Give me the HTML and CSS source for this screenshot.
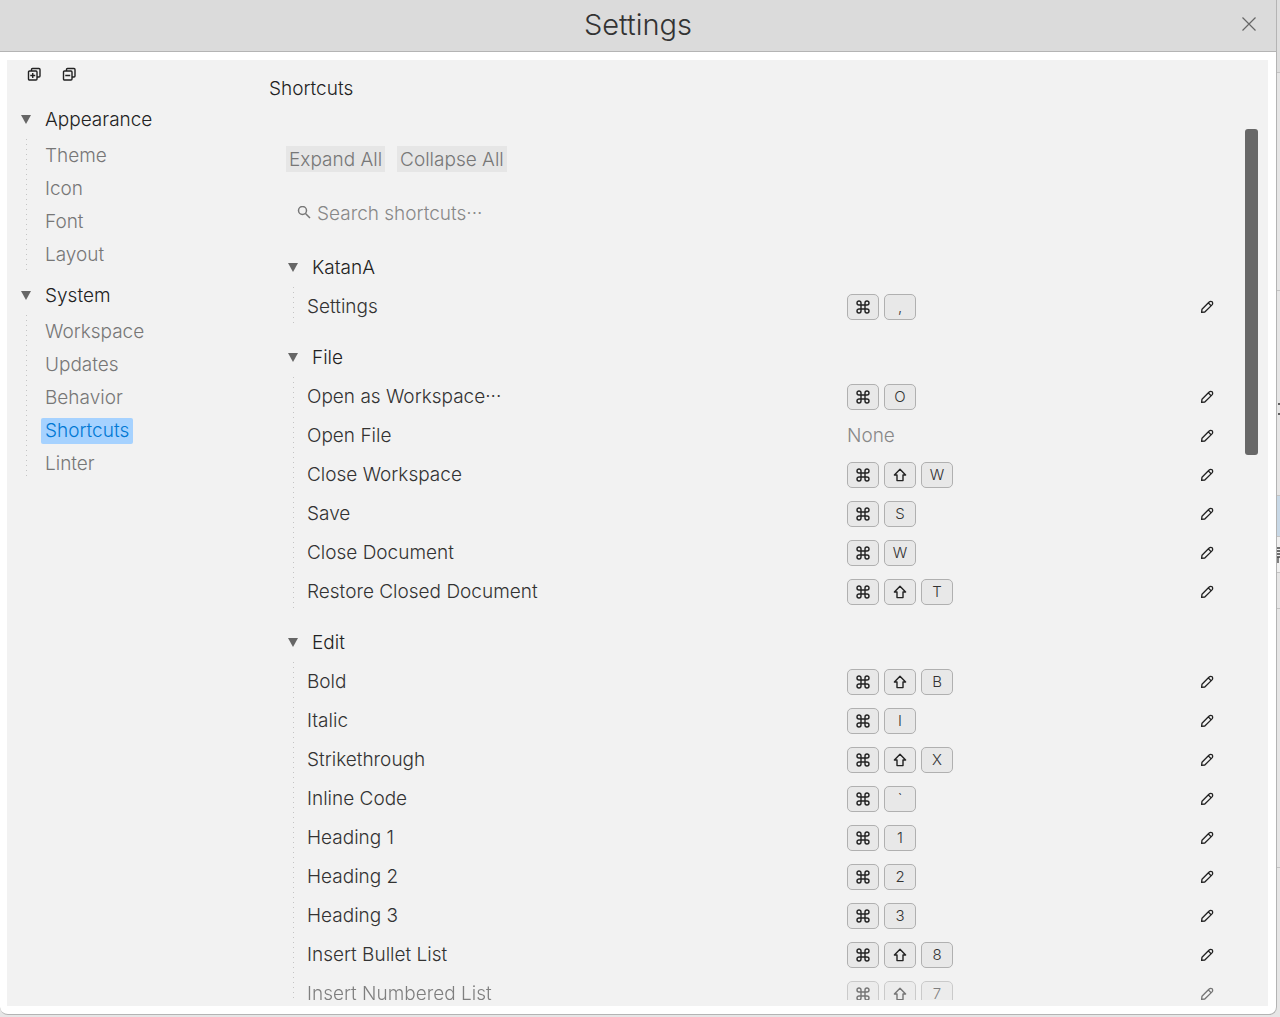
FILE: index.html
```html
<!DOCTYPE html>
<html lang="en">
<head>
    <meta charset="UTF-8">
    <meta name="viewport" content="width=device-width, initial-scale=1.0">
    <title>Settings</title>
    <link rel="stylesheet" href="styles.css">
</head>
<body>

<!-- Icons -->
<svg class="sprite" aria-hidden="true">
    <symbol id="cmd" viewBox="0 0 14 14">
        <path d="M5 5V3a2 2 0 1 0-2 2h8a2 2 0 1 0-2-2v8a2 2 0 1 0 2-2H3a2 2 0 1 0 2 2z" fill="none" stroke="currentColor" stroke-width="1.4"/>
    </symbol>
    <symbol id="shift" viewBox="0 0 14 14">
        <path d="M7 1.2L1.4 7H4V12.6H10V7H12.6Z" fill="none" stroke="currentColor" stroke-width="1.4" stroke-linejoin="round"/>
    </symbol>
    <symbol id="pencil" viewBox="0 0 14 14">
        <path d="M1.6 12.4L2 9.2L8.9 2.2Q10.500 .7 12.200 1.8Q13.300 3.500 11.800 5.100L4.800 12ZM8.300 2.900L11.100 5.700" fill="none" stroke="currentColor" stroke-width="1.3" stroke-linejoin="round"/>
    </symbol>
    <symbol id="arrow" viewBox="0 0 10 9">
        <path d="M0 0H10L5 9Z" fill="currentColor"/>
    </symbol>
</svg>

<div class="window">
    <header class="titlebar">
        <h1>Settings</h1>
        <button class="close" aria-label="Close">
            <svg width="14" height="14" viewBox="0 0 14 14"><path d="M.5.5l13 13M13.5.5l-13 13" stroke="currentColor" stroke-width="1.2"/></svg>
        </button>
    </header>

    <div class="panel">
        <nav class="sidebar">
            <div class="tools">
                <button aria-label="Expand all sections">
                    <svg width="14" height="14" viewBox="0 0 14 14" fill="none" stroke="currentColor" stroke-width="1.4"><rect x="1.5" y="4" width="8.500" height="9" rx="1"/><path d="M4.500 4V2.500Q4.500 1.500 5.500 1.500H12Q13 1.500 13 2.500V9Q13 10 12 10H10M5.750 6v5M3.250 8.500h5"/></svg>
                </button>
                <button aria-label="Collapse all sections">
                    <svg width="14" height="14" viewBox="0 0 14 14" fill="none" stroke="currentColor" stroke-width="1.4"><rect x="1.5" y="4" width="8.500" height="9" rx="1"/><path d="M4.500 4V2.500Q4.500 1.500 5.500 1.500H12Q13 1.500 13 2.500V9Q13 10 12 10H10M3.250 8.500h5"/></svg>
                </button>
            </div>

            <section class="group">
                <button class="group-title"><svg class="arrow"><use href="#arrow"/></svg>Appearance</button>
                <ul class="links">
                    <li><a href="#theme">Theme</a></li>
                    <li><a href="#icon">Icon</a></li>
                    <li><a href="#font">Font</a></li>
                    <li><a href="#layout">Layout</a></li>
                </ul>
            </section>

            <section class="group">
                <button class="group-title"><svg class="arrow"><use href="#arrow"/></svg>System</button>
                <ul class="links">
                    <li><a href="#workspace">Workspace</a></li>
                    <li><a href="#updates">Updates</a></li>
                    <li><a href="#behavior">Behavior</a></li>
                    <li><a href="#shortcuts" class="active">Shortcuts</a></li>
                    <li><a href="#linter">Linter</a></li>
                </ul>
            </section>
        </nav>

        <main class="content">
            <h2>Shortcuts</h2>

            <div class="scroll-area">
                <div class="shortcuts">
                    <div class="actions">
                        <button>Expand All</button>
                        <button>Collapse All</button>
                    </div>

                    <label class="search">
                        <svg width="14" height="14" viewBox="0 0 14 14" fill="none" stroke="currentColor" stroke-width="1.5"><circle cx="5.500" cy="4.500" r="4"/><path d="M8.500 7.500L13 12"/></svg>
                        <input type="text" placeholder="Search shortcuts···" aria-label="Search shortcuts">
                    </label>

                    <!-- KatanA -->
                    <section class="category">
                        <button class="group-title"><svg class="arrow"><use href="#arrow"/></svg>KatanA</button>
                        <ul class="rows">
                            <li><span>Settings</span><div class="keys"><kbd><svg><use href="#cmd"/></svg></kbd><kbd>,</kbd></div><button class="edit" aria-label="Edit"><svg><use href="#pencil"/></svg></button></li>
                        </ul>
                    </section>

                    <!-- File -->
                    <section class="category">
                        <button class="group-title"><svg class="arrow"><use href="#arrow"/></svg>File</button>
                        <ul class="rows">
                            <li><span>Open as Workspace···</span><div class="keys"><kbd><svg><use href="#cmd"/></svg></kbd><kbd>O</kbd></div><button class="edit" aria-label="Edit"><svg><use href="#pencil"/></svg></button></li>
                            <li><span>Open File</span><div class="keys none">None</div><button class="edit" aria-label="Edit"><svg><use href="#pencil"/></svg></button></li>
                            <li><span>Close Workspace</span><div class="keys"><kbd><svg><use href="#cmd"/></svg></kbd><kbd><svg><use href="#shift"/></svg></kbd><kbd>W</kbd></div><button class="edit" aria-label="Edit"><svg><use href="#pencil"/></svg></button></li>
                            <li><span>Save</span><div class="keys"><kbd><svg><use href="#cmd"/></svg></kbd><kbd>S</kbd></div><button class="edit" aria-label="Edit"><svg><use href="#pencil"/></svg></button></li>
                            <li><span>Close Document</span><div class="keys"><kbd><svg><use href="#cmd"/></svg></kbd><kbd>W</kbd></div><button class="edit" aria-label="Edit"><svg><use href="#pencil"/></svg></button></li>
                            <li><span>Restore Closed Document</span><div class="keys"><kbd><svg><use href="#cmd"/></svg></kbd><kbd><svg><use href="#shift"/></svg></kbd><kbd>T</kbd></div><button class="edit" aria-label="Edit"><svg><use href="#pencil"/></svg></button></li>
                        </ul>
                    </section>

                    <!-- Edit -->
                    <section class="category">
                        <button class="group-title"><svg class="arrow"><use href="#arrow"/></svg>Edit</button>
                        <ul class="rows">
                            <li><span>Bold</span><div class="keys"><kbd><svg><use href="#cmd"/></svg></kbd><kbd><svg><use href="#shift"/></svg></kbd><kbd>B</kbd></div><button class="edit" aria-label="Edit"><svg><use href="#pencil"/></svg></button></li>
                            <li><span>Italic</span><div class="keys"><kbd><svg><use href="#cmd"/></svg></kbd><kbd>I</kbd></div><button class="edit" aria-label="Edit"><svg><use href="#pencil"/></svg></button></li>
                            <li><span>Strikethrough</span><div class="keys"><kbd><svg><use href="#cmd"/></svg></kbd><kbd><svg><use href="#shift"/></svg></kbd><kbd>X</kbd></div><button class="edit" aria-label="Edit"><svg><use href="#pencil"/></svg></button></li>
                            <li><span>Inline Code</span><div class="keys"><kbd><svg><use href="#cmd"/></svg></kbd><kbd>`</kbd></div><button class="edit" aria-label="Edit"><svg><use href="#pencil"/></svg></button></li>
                            <li><span>Heading 1</span><div class="keys"><kbd><svg><use href="#cmd"/></svg></kbd><kbd>1</kbd></div><button class="edit" aria-label="Edit"><svg><use href="#pencil"/></svg></button></li>
                            <li><span>Heading 2</span><div class="keys"><kbd><svg><use href="#cmd"/></svg></kbd><kbd>2</kbd></div><button class="edit" aria-label="Edit"><svg><use href="#pencil"/></svg></button></li>
                            <li><span>Heading 3</span><div class="keys"><kbd><svg><use href="#cmd"/></svg></kbd><kbd>3</kbd></div><button class="edit" aria-label="Edit"><svg><use href="#pencil"/></svg></button></li>
                            <li><span>Insert Bullet List</span><div class="keys"><kbd><svg><use href="#cmd"/></svg></kbd><kbd><svg><use href="#shift"/></svg></kbd><kbd>8</kbd></div><button class="edit" aria-label="Edit"><svg><use href="#pencil"/></svg></button></li>
                            <li class="faded"><span>Insert Numbered List</span><div class="keys"><kbd><svg><use href="#cmd"/></svg></kbd><kbd><svg><use href="#shift"/></svg></kbd><kbd>7</kbd></div><button class="edit" aria-label="Edit"><svg><use href="#pencil"/></svg></button></li>
                        </ul>
                    </section>
                </div>
                <div class="scrollbar"><div class="thumb"></div></div>
            </div>
        </main>
    </div>
</div>

<!-- Edge of the window behind -->
<div class="backdrop" aria-hidden="true">
    <div class="strip-top"></div>
    <div class="strip-upper"></div>
    <div class="strip-list"><svg width="3" height="12" viewBox="0 0 3 12"><path d="M1 1H3M1 11H3" stroke="#333" stroke-width="1.500"/></svg></div>
    <div class="strip-selected"></div>
    <div class="strip-text"><svg width="3" height="16" viewBox="0 0 3 16"><path d="M0 1H3M0 4H3M0 7H3M0 10H3M1 10V16" stroke="#444" stroke-width="1.300"/></svg></div>
    <div class="strip-lower"></div>
    <div class="strip-rest"></div>
</div>

</body>
</html>
```
FILE: styles.css
```css
* {
    box-sizing: border-box;
}
body {
    margin: 0;
    height: 100vh;
    display: flex;
    overflow: hidden;
    background: #e6e6e6;
    color: #333;
    font-family: Inter, "Noto Sans CJK JP", sans-serif;
    font-size: 19px;
    font-weight: 300;
}
button, input {
    font: inherit;
    color: inherit;
    border: none;
    background: none;
    padding: 0;
}
button {
    cursor: pointer;
}
h1, h2, ul {
    margin: 0;
    padding: 0;
    font-weight: 300;
    list-style: none;
}
.sprite {
    display: none;
}
.window {
    flex: 1;
    min-width: 0;
    display: flex;
    flex-direction: column;
    margin-bottom: 2px;
    background: #fff;
    border: 1px solid #b4b4b4;
    border-width: 0 1px 1px 0;
    border-radius: 0 0 8px 8px;
}

/* Title bar */
.titlebar {
    display: grid;
    grid-template-columns: 1fr auto 1fr;
    align-items: center;
    height: 52px;
    padding-right: 20px;
    background: #dbdbdb;
    border-bottom: 1px solid #b4b4b4;
}
.titlebar h1 {
    grid-column: 2;
    padding: 0 0 2px 20px;
    font-size: 29px;
    line-height: 40px;
}
.close {
    justify-self: end;
    height: 20px;
    padding: 0 0 4px;
    color: #666;
}
.close svg {
    display: block;
    margin-top: 1px;
}

.panel {
    flex: 1;
    min-height: 0;
    display: flex;
    margin: 8px 8px 8px 7px;
    background: #f2f2f2;
}

/* Sidebar */
.sidebar {
    width: 262px;
    padding-left: 14px;
}
.tools {
    display: flex;
    gap: 21px;
    height: 39px;
    padding: 7px 6px;
    color: #222;
}
.tools button {
    height: 14px;
}
.tools svg {
    display: block;
}
.group {
    margin-bottom: 4px;
}
.group-title {
    display: flex;
    align-items: center;
    gap: 14px;
    height: 40px;
    color: #222;
}
.arrow {
    width: 10px;
    height: 9px;
    color: #666;
}
.links, .rows {
    background: repeating-linear-gradient(#c4c4c4 0 1px, transparent 1px 5px) left top / 1px 100% no-repeat;
}
.links {
    margin-left: 5px;
    padding-left: 15px;
}
.links li {
    display: flex;
    align-items: center;
    height: 33px;
}
.links a {
    padding: 0 4px;
    line-height: 26px;
    border-radius: 2px;
    color: #777;
    text-decoration: none;
}
.links a.active {
    background: #a6d2ff;
    color: #0078d4;
}

/* Shortcuts page */
.content {
    flex: 1;
    min-width: 0;
    display: flex;
    flex-direction: column;
    padding-bottom: 6px;
}
.content h2 {
    padding: 12px 0 23px;
    font-size: 19px;
    line-height: 34px;
    color: #222;
}
.scroll-area {
    flex: 1;
    min-height: 0;
    display: flex;
    padding-right: 10px;
}
.shortcuts {
    flex: 1;
    min-width: 0;
    overflow: hidden;
    padding: 17px 31px 0 17px;
}
.actions {
    display: flex;
    gap: 12px;
}
.actions button {
    padding: 1px 3px 0;
    line-height: 25px;
    background: #e6e6e6;
    color: #777;
}
.search {
    display: flex;
    align-items: center;
    gap: 6px;
    margin: 26px 0 19px;
    padding-left: 11px;
    color: #777;
}
.search input {
    flex: 1;
    height: 30px;
    outline: none;
}
.search input::placeholder {
    color: #888;
    opacity: 1;
}
.category {
    margin-bottom: 11px;
    padding-left: 2px;
}
.rows {
    margin-left: 5px;
    padding-left: 14px;
}
.rows li {
    display: grid;
    grid-template-columns: minmax(0, 540px) 1fr auto;
    align-items: center;
    height: 39px;
}
.rows li.faded {
    opacity: 0.6;
}
.keys {
    display: flex;
    gap: 5px;
}
.none {
    color: #888;
}
kbd {
    display: flex;
    align-items: center;
    justify-content: center;
    width: 32px;
    height: 26px;
    border: 1px solid #b0b0b0;
    border-radius: 5px;
    background: #e8e8e8;
    font-family: inherit;
    font-size: 15px;
}
kbd svg, .edit svg {
    display: block;
    width: 14px;
    height: 14px;
    color: #222;
}
.scrollbar {
    width: 13px;
}
.thumb {
    height: 326px;
    border-radius: 3px;
    background: #686868;
}

/* Window behind */
.backdrop {
    width: 3px;
    overflow: hidden;
    display: flex;
    flex-direction: column;
}
.backdrop div {
    flex: none;
    border-bottom: 1px solid #c4c4c4;
}
.backdrop svg {
    display: block;
}
.strip-top {
    height: 73px;
    background: #dedede;
}
.strip-upper {
    height: 218px;
}
.strip-list {
    height: 205px;
    padding-top: 112px;
}
.strip-selected {
    height: 41px;
    background: #c8d8e6;
}
.strip-text {
    height: 36px;
    padding-top: 10px;
    background: #f0f0f0;
}
.strip-lower {
    height: 36px;
}
.strip-rest {
    height: 259px;
}
```
